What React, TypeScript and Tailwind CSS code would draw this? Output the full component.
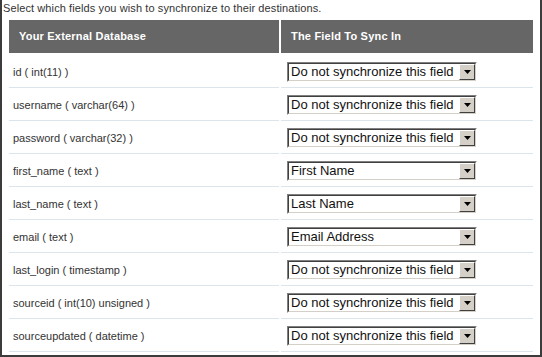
import React from 'react';

interface FieldRow {
    source: string;
    target: string;
}

const rows: FieldRow[] = [
    { source: 'id ( int(11) )', target: 'Do not synchronize this field' },
    { source: 'username ( varchar(64) )', target: 'Do not synchronize this field' },
    { source: 'password ( varchar(32) )', target: 'Do not synchronize this field' },
    { source: 'first_name ( text )', target: 'First Name' },
    { source: 'last_name ( text )', target: 'Last Name' },
    { source: 'email ( text )', target: 'Email Address' },
    { source: 'last_login ( timestamp )', target: 'Do not synchronize this field' },
    { source: 'sourceid ( int(10) unsigned )', target: 'Do not synchronize this field' },
    { source: 'sourceupdated ( datetime )', target: 'Do not synchronize this field' },
];

const FakeSelect: React.FC<{ value: string }> = ({ value }) => (
    <div className="w-[190px] h-[20px] border border-t-[#808080] border-l-[#808080] border-b-white border-r-white">
        <div className="h-full flex border border-t-[#404040] border-l-[#404040] border-b-[#d4d0c8] border-r-[#d4d0c8] bg-white">
            <span className="flex-1 pl-[2px] text-[13px] leading-[16px] text-[#111] whitespace-nowrap overflow-hidden">
                {value}
            </span>
            <div className="w-[16px] h-[16px] bg-[#d4d0c8] border border-t-white border-l-white border-b-[#404040] border-r-[#404040] flex items-center justify-center">
                <svg width="7" height="4" viewBox="0 0 7 4">
                    <path d="M0 0h7L3.5 4z" fill="#000" />
                </svg>
            </div>
        </div>
    </div>
);

const App: React.FC = () => {
    return (
        <div
            className="w-[542px] h-[357px] bg-white border-l-2 border-r-2 border-b-2 border-[#3c3c3c] overflow-hidden"
            style={{ fontFamily: '"Liberation Sans", Arial, sans-serif' }}
        >
            <p className="pl-[1px] pt-[2px] h-[18px] text-[11px] leading-[13px] tracking-[0.1px] text-[#333]">
                Select which fields you wish to synchronize to their destinations.
            </p>
            <div className="ml-[7px] mt-[2px] w-[524px]">
                <div className="grid grid-cols-[270px_252px] gap-x-[2px] h-[33px] mb-[2px]">
                    <div className="bg-[#666] flex items-center pl-[10px] text-[11px] font-bold tracking-[0.2px] text-white">
                        Your External Database
                    </div>
                    <div className="bg-[#666] flex items-center pl-[10px] text-[11px] font-bold tracking-[0.2px] text-white">
                        The Field To Sync In
                    </div>
                </div>
                {rows.map((row) => (
                    <div key={row.source} className="grid grid-cols-[270px_252px] gap-x-[2px] h-[33px]">
                        <div className="flex items-center pl-[4px] pt-[2px] border-b border-[#dce4ec] text-[11px] text-[#333]">
                            {row.source}
                        </div>
                        <div className="flex items-center pl-[6px] pt-[2px] border-b border-[#dce4ec]">
                            <FakeSelect value={row.target} />
                        </div>
                    </div>
                ))}
            </div>
        </div>
    );
};

export default App;
